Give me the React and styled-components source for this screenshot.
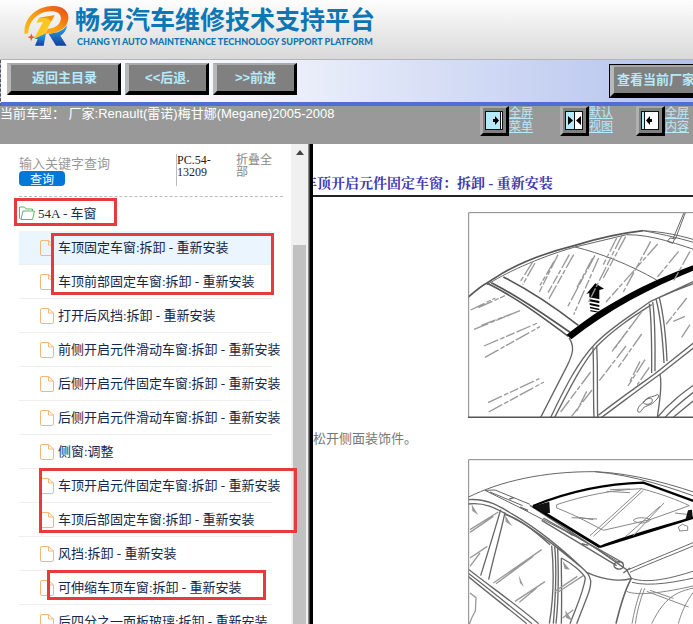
import React, { useState } from 'react';
import styled, { createGlobalStyle } from 'styled-components';

const GlobalStyle = createGlobalStyle`
  * {
    box-sizing: border-box;
  }
  body {
    margin: 0;
    overflow: hidden;
    background: #fff;
    font-family: 'Liberation Serif', 'Noto Sans CJK SC', serif;
    font-size: 13px;
  }
`;

const Page = styled.div`
  display: flex;
  flex-direction: column;
  height: 100vh;
  overflow: hidden;
`;

const Header = styled.header`
  display: flex;
  flex: none;
  gap: 5px;
  height: 60px;
  padding: 2px 0 0 24px;
  background: linear-gradient(#fdfdfd, #d9d9d9);
  border-bottom: 1px solid #b4b4b8;
`;

const LogoMark = styled.svg`
  flex: none;
  width: 46px;
  height: 42px;
  margin-top: 3px;
`;

const Brand = styled.div`
  display: flex;
  flex-direction: column;
  gap: 3px;
  color: #0d76b4;
  white-space: nowrap;
`;

const BrandName = styled.h1`
  margin: 0;
  font: 700 25px/32px 'Noto Sans CJK SC', sans-serif;
`;

const BrandSub = styled.span`
  padding-left: 2px;
  font: 900 9px/10px Lato, 'Liberation Sans', sans-serif;
`;

const Toolbar = styled.nav`
  display: flex;
  flex: none;
  gap: 4px;
  height: 46px;
  padding: 3px 0 0 6px;
  border-left: 1px dashed #555;
  border-bottom: 4px solid #4d70d2;
  background: linear-gradient(90deg, #fff 0, #f3f5fc 35%, #cbd5f3 75%, #b3c2ee 100%);
  overflow: hidden;
`;

const ToolButton = styled.button`
  flex: none;
  width: ${(props) => (props.$wide ? '114px' : '84px')};
  height: 32px;
  padding: 0;
  border-style: solid;
  border-width: 2px 3px 4px 4px;
  border-color: #a8a8a8 #000 #000 #b8b8b8;
  background: #808080;
  color: #b5e9fb;
  font: 700 13px/20px 'Liberation Sans', 'Noto Sans CJK SC', sans-serif;
  white-space: nowrap;
  cursor: pointer;
`;

const MakerButton = styled(ToolButton)`
  width: 100px;
  height: 32px;
  margin: 2px -17px 0 auto;
  padding-left: 3px;
  outline: 1px solid #000;
  text-align: left;
`;

const StatusBar = styled.div`
  display: flex;
  flex: none;
  justify-content: space-between;
  height: 38px;
  background: #999;
  color: #fff;
  font: 13px/16px 'Liberation Sans', 'Noto Sans CJK SC', sans-serif;
  white-space: nowrap;
`;

const ViewLinks = styled.div`
  display: grid;
  grid-template-columns: 80px 76px 57px;
`;

const ViewLink = styled.a`
  display: flex;
  color: #b5e9fb;
  font-size: 12px;
  line-height: 14px;
  span {
    width: 24px;
    white-space: normal;
    text-decoration: underline;
  }
`;

const ViewIcon = styled.svg`
  flex: none;
  width: 29px;
  height: 30px;
  border-style: solid;
  border-width: 2px 3px 3px 3px;
  border-color: #a8a8a8 #000 #000 #b0b0b0;
  background: #808080;
`;

const Body = styled.div`
  display: flex;
  flex: 1;
  min-height: 0;
`;

// sits above the scrollbar, since one red frame reaches over it
const Sidebar = styled.aside`
  position: relative;
  z-index: 1;
  flex: none;
  width: 291px;
  padding: 10px 0 0 19px;
`;

const SearchBar = styled.form`
  display: flex;
  align-items: flex-start;
  height: 43px;
  margin-right: 8px;
  border-bottom: 1px dashed #bbb;
  font-size: 12px;
  line-height: 12px;
`;

const SearchField = styled.div`
  display: flex;
  flex-direction: column;
  align-items: flex-start;
  width: 157px;
`;

const SearchInput = styled.input`
  width: 130px;
  height: 17px;
  padding: 2px 0 0;
  border: 0;
  outline: 0;
  background: none;
  font: 13px/15px 'Liberation Serif', 'Noto Sans CJK SC', serif;
  &::placeholder {
    color: #999;
    opacity: 1;
  }
`;

const SearchButton = styled.button`
  width: 46px;
  height: 15px;
  padding: 0;
  border: 0;
  border-radius: 4px;
  background: #0078d7;
  color: #fff;
  font: 12px/14px 'Noto Sans CJK SC', sans-serif;
  cursor: pointer;
`;

const DocCode = styled.span`
  width: 60px;
  height: 32px;
  padding-right: 20px;
  border-left: 1px solid #bbb;
  color: #222;
`;

const CollapseButton = styled.button`
  width: 38px;
  padding: 0;
  border: 0;
  background: none;
  color: #888;
  font: inherit;
  text-align: left;
  cursor: pointer;
`;

const Folder = styled.div`
  display: flex;
  align-items: center;
  gap: 3px;
  height: 34px;
  padding-bottom: 3px;
  color: #1b2b49;
`;

const List = styled.ul`
  margin: 0;
  padding: 0;
  list-style: none;
`;

// red frame that lies over one or more rows
const Marked = styled.div`
  position: relative;
  &::after {
    content: '';
    position: absolute;
    inset: ${(props) => props.$frame};
    border: 3px solid #e63a3e;
    pointer-events: none;
  }
`;

const Row = styled.li`
  height: 34px;
  margin-right: 19px;
  border-bottom: 1px solid #eee;
  background: ${(props) => (props.$active ? '#ebf5fe' : 'none')};
`;

const RowLink = styled.a`
  display: flex;
  align-items: center;
  gap: 4px;
  height: 33px;
  padding-left: 21px;
  color: #14284b;
  line-height: 20px;
  text-decoration: none;
  white-space: nowrap;
  svg {
    flex: none;
  }
`;

const ScrollTrack = styled.div`
  display: flex;
  flex: none;
  flex-direction: column;
  align-items: center;
  width: 18px;
  padding-top: 6px;
  border-right: 1px solid #888;
  background: #f0f0f0;
`;

const ScrollThumb = styled.div`
  flex: 1;
  width: 13px;
  margin-top: 90px;
  background: #c1c1c1;
`;

const Splitter = styled.div`
  flex: none;
  width: 4px;
  border-left: 1px solid #444;
  background: #000;
`;

const Article = styled.main`
  flex: 1;
  min-width: 0;
  padding-top: 28px;
  overflow: hidden;
`;

const ArticleTitle = styled.h2`
  height: 25px;
  margin: 0;
  border-bottom: 2px solid #222;
  color: #4038b0;
  font: 700 14px/24px 'Liberation Serif', 'Noto Serif CJK SC', 'Noto Sans CJK SC', serif;
  white-space: nowrap;
  text-indent: -10px;
`;

const Figure = styled.svg`
  display: block;
  width: 240px;
  height: 206px;
  margin: 15px 0 0 155px;
  fill: none;
  stroke: #666;
  stroke-width: 3;
`;

const Step = styled.p`
  height: 26px;
  margin: 0;
  padding-top: 8px;
  color: #777;
  line-height: 26px;
`;

const items = [
  ['车顶固定车窗:拆卸 - 重新安装', '车顶前部固定车窗:拆卸 - 重新安装'],
  ['打开后风挡:拆卸 - 重新安装'],
  ['前侧开启元件滑动车窗:拆卸 - 重新安装'],
  ['后侧开启元件固定车窗:拆卸 - 重新安装'],
  ['后侧开启元件滑动车窗:拆卸 - 重新安装'],
  ['侧窗:调整'],
  ['车顶开启元件固定车窗:拆卸 - 重新安装', '车顶后部固定车窗:拆卸 - 重新安装'],
  ['风挡:拆卸 - 重新安装'],
  ['可伸缩车顶车窗:拆卸 - 重新安装'],
  ['后四分之一面板玻璃:拆卸 - 重新安装'],
];

const frames = {
  0: '2px 17px 4px 32px',
  6: '-1px -6px 4px 20px',
  8: '-1px 25px 5px 28px',
};

function Logo() {
  return (
    <LogoMark viewBox="0 0 138 126" aria-hidden="true">
      <defs>
        <linearGradient id="fire" x1="0" y1="1" x2="1" y2="0">
          <stop offset="0" stopColor="#f9c21a" />
          <stop offset="0.5" stopColor="#f79a12" />
          <stop offset="1" stopColor="#e6451b" />
        </linearGradient>
        <linearGradient id="sea" x1="0" y1="0" x2="0" y2="1">
          <stop offset="0" stopColor="#2ea7e8" />
          <stop offset="1" stopColor="#123f9c" />
        </linearGradient>
      </defs>
      <path fill="url(#fire)" d="M2 88C-4 42 38 2 88 3c38 0 52 26 42 50-6 16-22 26-42 31l-26 3 9-16c23-1 36-12 39-27 3-17-10-26-31-25C44 20 14 47 13 84z" />
      <path fill="#fbc71f" d="M45 38 92 31 61 87 30 101 57 51 37 53z" />
      <path fill="#f59216" d="M45 38 92 31 82 49 69 40z" />
      <path fill="url(#sea)" d="M31 101 66 85 59 122H33l8-20z" />
      <path fill="url(#sea)" d="M74 87 101 82c13-5 22-12 28-21-1 14-8 24-20 31l19 30H96z" />
      <path fill="#e95a20" d="m22 85 3 9 9 2-9 4-4 9-2-9-9-4 9-2z" />
    </LogoMark>
  );
}

function FileIcon() {
  return (
    <svg width="14" height="16" viewBox="0 0 14 16" fill="none" stroke="#f2b877" aria-hidden="true">
      <path d="M2 .5H8.500L13.500 5V14a1.500 1.500 0 0 1-1.500 1.500H2A1.500 1.500 0 0 1 .5 14V2A1.500 1.500 0 0 1 2 .5M8.500 .5V5H13.500" />
    </svg>
  );
}

function FolderIcon() {
  return (
    <svg width="16" height="14" viewBox="0 0 16 14" fill="none" stroke="#62b866" strokeLinejoin="round" aria-hidden="true">
      <path d="M2 13.500.5 12V1H5.500L7 3H13.500V5M2 13.500 4 5H15.500L13.500 13.500Z" />
    </svg>
  );
}

function PaneIcon({ type }) {
  return (
    <ViewIcon viewBox="0 0 23 25" aria-hidden="true">
      <rect x="2.500" y="3.500" width="17" height="18" fill="#fff" stroke="#111" />
      {type === 'menu' && (
        <>
          <path fill="#b5e9fb" d="M3 4h14v17H3z" />
          <path stroke="#111" d="M17.500 4v17" />
          <path d="M10 11h2V8l4 4.500-4 4.500v-3h-2z" />
        </>
      )}
      {type === 'both' && (
        <>
          <path fill="#b5e9fb" d="M3 4h8v17H3z" />
          <path stroke="#111" d="M11.500 4v17" />
          <path d="M5 8l5 4.500L5 17zM18 8l-5 4.500 5 4.500z" />
        </>
      )}
      {type === 'content' && (
        <>
          <path fill="#b5e9fb" d="M3 4h2v17H3z" />
          <path stroke="#111" d="M5.500 4v17" />
          <path d="M13 11h-2V8l-4 4.500 4 4.500v-3h2z" />
        </>
      )}
    </ViewIcon>
  );
}

function RoofSideFigure() {
  return (
    <Figure viewBox="24 22 720 618" role="img" aria-label="车顶开启元件固定车窗">
      <g strokeWidth="5" stroke="#555">
        <path d="M24 278C50 255 65 242 82 234L130 204C190 170 265 142 345 122 410 102 480 86 550 78" />
        <path d="M82 236C180 285 250 340 325 395M94 234C185 280 260 335 333 385M130 217C220 262 290 312 355 362" />
      </g>
      <path d="M80 241C130 208 230 160 345 127L500 90C580 90 650 118 744 148M550 78C610 82 660 90 744 118M550 78C620 92 660 100 744 126M345 127C420 145 510 180 590 226" />
      <path stroke="none" fill="#000" d="M320 390C430 300 580 220 744 166V181C600 235 460 305 334 404Z" />
      <path strokeWidth="4" d="M327 400C345 425 338 450 322 482L242 638M272 638C310 560 350 475 405 418 450 370 510 335 572 290 620 268 680 240 744 210M284 638C325 560 360 485 412 423 465 370 520 335 575 300M590 282C630 262 680 245 744 220" />
      <path strokeWidth="4" d="M399 428C402 500 399 560 402 638M410 423C414 490 411 560 413 638M568 297C576 350 575 430 575 505M578 292C587 350 585 440 585 500M588 283C603 340 608 400 612 475M598 279C613 340 618 400 621 470" />
      <path strokeWidth="4" d="M415 632C500 565 570 520 600 495L744 380M425 638C510 575 570 530 605 505L744 396M600 508C608 550 598 590 592 638M592 638C640 580 690 550 744 510M615 638C660 590 710 555 744 530M640 638 744 552" />
      <path d="M533 615c5-18 16-16 26-32 10-9 20-4 34-14 8 6-4 16-12 24-12 12-28 8-36 24-4 8-14 8-12-2m16-22c12-14 28-16 28-6s-18 18-28 6M672 24 640 100M676 24 646 104M622 110l8-10 14 2-6 14z" />
      <path stroke="none" fill="#000" d="M406 236 432 252 418 256V284L388 278V265L379 268ZM388 283 418 289V296L388 290ZM389 295 418 301V307L389 301ZM390 306 418 312V317L390 311ZM391 316 416 321V324L391 320Z" />
      <g stroke="#999" strokeWidth="4" strokeDasharray="46 7 14 5 28 6">
        <path d="M225 175 188 240M218 172 180 232M294 150 238 262M282 170 240 242M341 150 266 284M328 150 264 264M405 152 322 308M416 160 341 330M398 160 350 250M486 92 386 292M497 96 430 220M572 110 490 262M593 118 438 292M470 100 430 180" />
        <path d="M32 316 106 280M55 309 135 273M42 374 180 318M64 362 160 326M72 424 235 354M75 458 240 366M84 594 238 522M86 622 252 532" />
        <path d="M546 320 456 440M535 335 465 430M545 388 475 488M498 424 418 528M555 465 504 544M568 488 532 540M540 470 510 530M392 502 302 622M396 556 334 636M380 560 350 620M680 280 616 362M656 140 590 220M690 140 640 230M690 360 665 398M675 335 640 350" />
      </g>
      <path stroke="#888" d="M744 24H26V638" />
      <path stroke="#555" strokeWidth="5" d="M24 638H744" />
    </Figure>
  );
}

function RoofTopFigure() {
  return (
    <Figure viewBox="24 28 720 618" role="img" aria-label="车顶玻璃总成">
      <path d="M24 143C120 95 250 65 405 66 520 76 640 115 744 155M405 66C520 70 650 108 744 142M75 122 105 121 210 164M75 122 180 174 350 262 480 340M90 127 188 168" />
      <path strokeWidth="4" d="M24 150C80 145 120 170 160 195 240 242 310 300 380 368 440 395 490 395 514 386L500 360 405 294 210 167M24 163C85 155 120 185 180 216 235 247 300 300 360 350 400 380 397 400 382 440L350 522M250 205 490 340M245 212 470 348M510 355 490 370M462 350c0-16 24-20 28-5s-20 18-28 5M148 148l14-4M180 172l24 10M320 245l18 12M365 282l20 5" />
      <path strokeWidth="7" stroke="#000" d="M219 169C310 132 430 102 550 99L744 170M744 190C640 224 510 256 420 292Z" />
      <path strokeWidth="8" stroke="#000" d="M219 169 420 292" />
      <path stroke="none" fill="#111" d="M219 170 268 156 270 190 250 190zM684 182l12-2 2 22-22 8z" />
      <path stroke="#888" d="M290 165C370 138 460 120 545 117 610 135 650 150 688 168L570 210 430 242C370 210 330 190 290 175zM545 117 390 258M550 122 400 260M612 160 520 258M600 170 495 262M520 212c10-12 40-8 52-2-10 12-40 14-52 2M440 125l70 4M450 120l60-2M335 204l76 4M350 202l50 8M655 232l12-8 16 6v12l-24 2zM645 190l36 4" />
      <path strokeWidth="4" d="M122 180C102 250 80 320 62 378M135 188C120 260 98 330 86 390M133 195C170 200 220 240 270 285M275 288C282 360 280 450 268 522M284 290C292 370 286 450 280 522M293 295C296 370 296 450 288 522M304 325C335 340 370 370 376 385 370 430 345 480 330 522M304 325C304 400 306 450 304 522M24 358C90 410 170 465 236 522M24 370C90 420 150 470 216 522M24 380C90 435 150 480 200 522" />
      <path stroke="#999" strokeWidth="4" d="M30 240 115 187M30 248 100 200M30 325 82 290M30 350 60 310M100 400 245 300M108 402 220 320M165 455 255 396M178 458 230 415M285 425 352 380M290 430 370 378M308 505 340 480M30 430l18 14-2 40c-8 14-14 26-18 40" />
      <path stroke="none" fill="#999" d="m35 164 20 32-18-12zM135 196l22 34-20-14zM176 376l16 36-12-12zM308 334l22 26-16-2zM316 482l22 32-20-10z" />
      <path d="M510 368C570 340 640 315 744 270M505 360C570 332 650 300 744 260M514 386C570 405 650 382 744 350M516 398C570 412 650 398 744 375" />
      <path strokeWidth="5" d="M514 386C490 430 478 480 468 522" />
      <path d="M500 425C530 440 620 430 744 398M545 416C530 450 522 490 516 522M554 416C540 450 530 490 526 522M560 425 686 472M570 422 640 446M575 522C620 430 660 420 744 408M655 522C670 470 690 430 744 380" stroke="#888" />
      <path stroke="#888" d="M744 30H26V646" />
    </Figure>
  );
}

function TreeItem({ label, active, onSelect }) {
  return (
    <Row $active={active}>
      <RowLink href="#doc" onClick={() => onSelect(label)}>
        <FileIcon />
        {label}
      </RowLink>
    </Row>
  );
}

function App() {
  const [keyword, setKeyword] = useState('');
  const [selected, setSelected] = useState(items[0][0]);

  return (
    <Page>
      <GlobalStyle />
      <Header>
        <Logo />
        <Brand>
          <BrandName>畅易汽车维修技术支持平台</BrandName>
          <BrandSub>CHANG YI AUTO MAINTENANCE TECHNOLOGY SUPPORT PLATFORM</BrandSub>
        </Brand>
      </Header>
      <Toolbar>
        <ToolButton $wide>返回主目录</ToolButton>
        <ToolButton>&lt;&lt;后退.</ToolButton>
        <ToolButton>&gt;&gt;前进</ToolButton>
        <MakerButton>查看当前厂家</MakerButton>
      </Toolbar>
      <StatusBar>
        <span>当前车型： 厂家:Renault(雷诺)梅甘娜(Megane)2005-2008</span>
        <ViewLinks>
          <ViewLink href="#menu">
            <PaneIcon type="menu" />
            <span>全屏菜单</span>
          </ViewLink>
          <ViewLink href="#default">
            <PaneIcon type="both" />
            <span>默认视图</span>
          </ViewLink>
          <ViewLink href="#content">
            <PaneIcon type="content" />
            <span>全屏内容</span>
          </ViewLink>
        </ViewLinks>
      </StatusBar>
      <Body>
        <Sidebar>
          <SearchBar onSubmit={(e) => e.preventDefault()}>
            <SearchField>
              <SearchInput
                aria-label="输入关键字查询"
                placeholder="输入关键字查询"
                value={keyword}
                onChange={(e) => setKeyword(e.target.value)}
              />
              <SearchButton type="submit">查询</SearchButton>
            </SearchField>
            <DocCode>PC.54-13209</DocCode>
            <CollapseButton type="button">折叠全部</CollapseButton>
          </SearchBar>
          <Marked $frame="1px 174px 5px -5px">
            <Folder>
              <FolderIcon />
              54A - 车窗
            </Folder>
          </Marked>
          {items.map((group, i) => {
            const rows = group.map((label) => (
              <TreeItem
                key={label}
                label={label}
                active={label === selected}
                onSelect={setSelected}
              />
            ));
            return frames[i] ? (
              <Marked key={group[0]} $frame={frames[i]}>
                <List>{rows}</List>
              </Marked>
            ) : (
              <List key={group[0]}>{rows}</List>
            );
          })}
        </Sidebar>
        <ScrollTrack>
          <svg width="8" height="5" viewBox="0 0 8 5" aria-hidden="true">
            <path fill="#444" d="M4 0 8 5H0z" />
          </svg>
          <ScrollThumb />
        </ScrollTrack>
        <Splitter />
        <Article>
          <ArticleTitle>车顶开启元件固定车窗：拆卸 - 重新安装</ArticleTitle>
          <RoofSideFigure />
          <Step>松开侧面装饰件。</Step>
          <RoofTopFigure />
        </Article>
      </Body>
    </Page>
  );
}

export default App;
